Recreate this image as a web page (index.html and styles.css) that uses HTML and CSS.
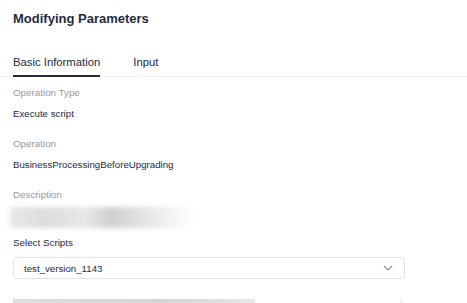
FILE: index.html
```html
<!DOCTYPE html>
<html>
<head>
<meta charset="utf-8">
<link rel="stylesheet" href="styles.css">
</head>
<body>
<div class="panel">
  <h1 class="title">Modifying Parameters</h1>
  <div class="tabs">
    <div class="tab active">Basic Information</div>
    <div class="tab">Input</div>
  </div>
  <div class="field">
    <div class="label">Operation Type</div>
    <div class="value">Execute script</div>
  </div>
  <div class="field">
    <div class="label">Operation</div>
    <div class="value">BusinessProcessingBeforeUpgrading</div>
  </div>
  <div class="field">
    <div class="label">Description</div>
    <div class="blurred"></div>
  </div>
  <div class="field select-field">
    <div class="label dark">Select Scripts</div>
    <div class="select">
      <span>test_version_1143</span>
      <svg class="chev" width="10" height="6" viewBox="0 0 10 6"><path d="M1 1l4 4 4-4" fill="none" stroke="#8a8e99" stroke-width="1.2"/></svg>
    </div>
  </div>
  <div class="bottom">
    <div class="bottom-blur"></div>
    <div class="bottom-line"></div>
  </div>
</div>
</body>
</html>
```
FILE: styles.css
```css
html, body {
  margin: 0;
  padding: 0;
  background: #fff;
}
body {
  font-family: "Liberation Sans", Arial, sans-serif;
  color: #252b3a;
  overflow: hidden;
  height: 303px;
}
.panel {
  padding: 11px 0 0 0;
}
.title {
  margin: 0 0 0 13px;
  font-size: 13px;
  font-weight: bold;
  line-height: 16px;
}
.tabs {
  display: flex;
  gap: 33px;
  margin-top: 25px;
  padding-left: 13px;
  border-bottom: 1px solid #f0f0f0;
}
.tab {
  font-size: 11.3px;
  line-height: 14px;
  padding: 3px 0 6px;
  border-bottom: 2px solid transparent;
  margin-bottom: -1px;
}
.tab.active {
  border-bottom-color: #252b3a;
}
.field {
  padding-left: 13px;
}
.label {
  font-size: 9.8px;
  line-height: 12px;
  color: #959aa5;
  margin-top: 10px;
}
.label.dark {
  color: #252b3a;
}
.value {
  font-size: 9.7px;
  line-height: 12px;
  margin-top: 9px;
  margin-bottom: 18px;
}
.blurred {
  margin-left: -3px;
  margin-top: 6px;
  width: 184px;
  height: 21px;
  background: linear-gradient(90deg, #e8e8e8 0%, #dcdcdc 20%, #e8e8e8 40%, #d0d0d0 55%, #e6e6e6 75%, #fff 100%);
  filter: blur(2.5px);
}
.select-field .label {
  margin-top: 9px;
}
.select {
  margin-top: 8px;
  height: 20px;
  border: 1px solid #dfe1e6;
  border-radius: 4px;
  display: flex;
  align-items: center;
  justify-content: space-between;
  padding: 0 11px 0 10px;
  box-sizing: content-box;
  width: 369px;
  font-size: 9.7px;
}
.bottom {
  display: flex;
  margin-top: 20px;
  padding-left: 13px;
  align-items: flex-start;
}
.bottom-blur {
  width: 242px;
  height: 10px;
  background: linear-gradient(90deg, #dedede, #d4d4d4 60%, #e8e8e8);
}
.bottom-line {
  width: 1px;
  height: 10px;
  background: #dfe1e6;
  margin-left: 146px;
}
```
